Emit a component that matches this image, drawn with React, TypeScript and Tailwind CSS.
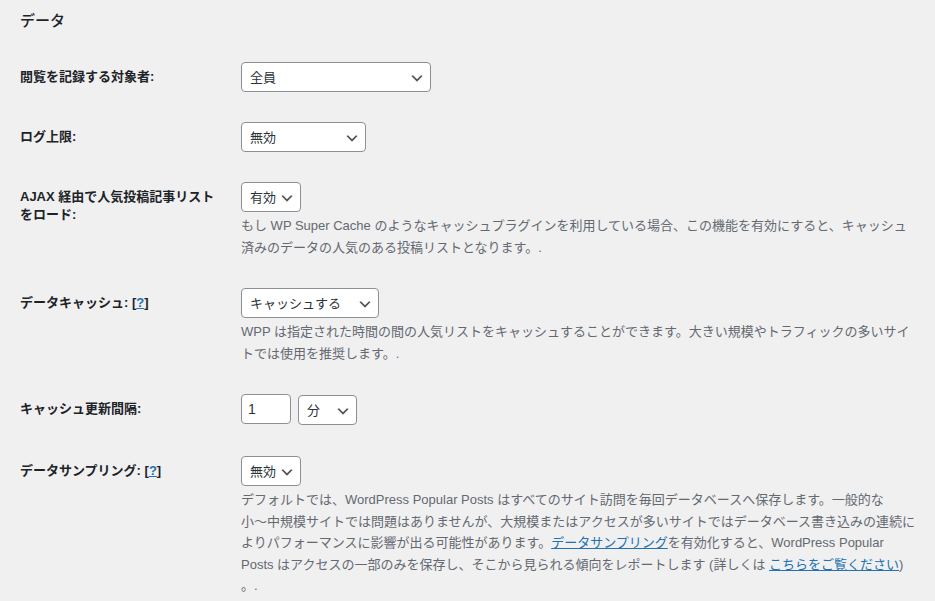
import React from "react";

const FONT = {
  fontFamily: '"Liberation Sans", "Noto Sans CJK JP", sans-serif',
};

function Chevron() {
  return (
    <svg
      width="16"
      height="16"
      viewBox="0 0 20 20"
      className="shrink-0 translate-y-[1.5px]"
      aria-hidden="true"
    >
      <path d="M5 6l5 5 5-5 2 1-7 7-7-7 2-1z" fill="#555" />
    </svg>
  );
}

function FakeSelect({ value, width }: { value: string; width: string }) {
  return (
    <div
      className={`${width} h-[30px] flex items-center justify-between bg-white border border-[#8c8f94] rounded-[4px] pl-2 pr-[5px] text-[13px] text-[#2c3338] shrink-0`}
    >
      <span className="leading-none whitespace-nowrap">{value}</span>
      <Chevron />
    </div>
  );
}

function Row({
  label,
  children,
  tdClass = "py-[15px]",
}: {
  label: React.ReactNode;
  children: React.ReactNode;
  tdClass?: string;
}) {
  return (
    <div className="flex">
      <div className="w-[221px] shrink-0 pr-[21px] pt-[21px] font-semibold leading-[18px] text-[#1d2327]">
        {label}
      </div>
      <div className={`flex-1 ${tdClass}`}>{children}</div>
    </div>
  );
}

function Desc({ children }: { children: React.ReactNode }) {
  return (
    <p className="mt-[3px] text-[13px] leading-[21.5px] text-[#646970] whitespace-nowrap">
      {children}
    </p>
  );
}

function Help() {
  return (
    <span>
      [<a className="text-[#2271b1] underline">?</a>]
    </span>
  );
}

export default function App() {
  return (
    <div
      className="min-h-screen w-full bg-[#f0f0f1] text-[13px] text-[#3c434a] overflow-hidden"
      style={FONT}
    >
      <div className="pl-5 pt-[11px]">
        <h2 className="text-[15px] leading-5 font-medium text-[#1d2327]">データ</h2>
        <div className="mt-4">
          <Row label="閲覧を記録する対象者:">
            <FakeSelect value="全員" width="w-[190px]" />
          </Row>
          <Row label="ログ上限:">
            <FakeSelect value="無効" width="w-[125px]" />
          </Row>
          <Row
            label={
              <>
                AJAX 経由で人気投稿記事リスト
                <br />
                をロード:
              </>
            }
          >
            <FakeSelect value="有効" width="w-[60px]" />
            <Desc>
              もし WP Super Cache のようなキャッシュプラグインを利用している場合、この機能を有効にすると、キャッシュ
              <br />
              済みのデータの人気のある投稿リストとなります。.
            </Desc>
          </Row>
          <Row
            label={
              <>
                データキャッシュ: <Help />
              </>
            }
          >
            <FakeSelect value="キャッシュする" width="w-[138px]" />
            <Desc>
              WPP は指定された時間の間の人気リストをキャッシュすることができます。大きい規模やトラフィックの多いサイ
              <br />
              トでは使用を推奨します。.
            </Desc>
          </Row>
          <Row label="キャッシュ更新間隔:" tdClass="pt-[15px] pb-[16px]">
            <div className="flex items-start gap-[7px]">
              <div className="w-[50px] h-[30px] flex items-center bg-white border border-[#8c8f94] rounded-[4px] pl-[6px] text-[14px] text-[#2c3338]">
                1
              </div>
              <div className="mt-[1px]">
                <FakeSelect value="分" width="w-[59px]" />
              </div>
            </div>
          </Row>
          <Row
            label={
              <>
                データサンプリング: <Help />
              </>
            }
          >
            <FakeSelect value="無効" width="w-[60px]" />
            <Desc>
              デフォルトでは、WordPress Popular Posts はすべてのサイト訪問を毎回データベースへ保存します。一般的な
              <br />
              小〜中規模サイトでは問題はありませんが、大規模またはアクセスが多いサイトではデータベース書き込みの連続に
              <br />
              よりパフォーマンスに影響が出る可能性があります。
              <a className="text-[#2271b1] underline">データサンプリング</a>
              を有効化すると、WordPress Popular
              <br />
              Posts はアクセスの一部のみを保存し、そこから見られる傾向をレポートします (詳しくは{" "}
              <a className="text-[#2271b1] underline">こちらをご覧ください</a>)
              <br />
              。.
            </Desc>
          </Row>
        </div>
      </div>
    </div>
  );
}
